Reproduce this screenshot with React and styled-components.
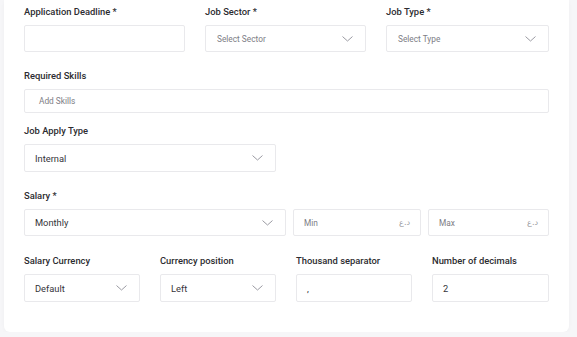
import styled, { createGlobalStyle } from "styled-components";

const GlobalStyle = createGlobalStyle`
  html, body {
    margin: 0;
    padding: 0;
    background: #f6f6f8;
    font-family: Roboto, "Liberation Sans", sans-serif;
  }
  * { box-sizing: border-box; }
`;

const Card = styled.div`
  margin-left: 4px;
  width: 565px;
  background: #fff;
  border-radius: 0 0 6px 6px;
  box-shadow: 0 1px 4px rgba(0, 0, 0, 0.03);
  padding: 5px 20px 30px 20px;
`;

const Row = styled.div`
  display: grid;
  grid-template-columns: ${(p) => p.cols};
  column-gap: ${(p) => p.gap || 20}px;
  margin-top: ${(p) => p.top || 0}px;
  width: 525px;
`;

const Field = styled.div`
  display: flex;
  flex-direction: column;
  min-width: 0;
`;

const Label = styled.label`
  font-size: 9.4px;
  font-weight: 500;
  line-height: 14px;
  color: #2c2c30;
  margin-bottom: ${(p) => p.space || 6}px;
`;

const Box = styled.div`
  height: ${(p) => p.h || 27}px;
  border: 1px solid #e9e9ec;
  border-radius: 2px;
  background: #fff;
  display: flex;
  align-items: center;
  justify-content: space-between;
  padding: 0 ${(p) => p.pr || 12}px 0 ${(p) => p.pl || 10}px;
`;

const Value = styled.span`
  font-size: 9.3px;
  color: #35353a;
`;

const Placeholder = styled.span`
  font-size: 8.3px;
  color: #7d7d85;
`;

const Currency = styled.span`
  font-family: "DejaVu Sans", sans-serif;
  font-size: 8px;
  color: #9a9aa0;
  direction: rtl;
`;

const Chevron = () => (
  <svg width="11" height="6" viewBox="0 0 11 6" fill="none">
    <polyline
      points="0.8,0.8 5.5,5 10.2,0.8"
      stroke="#9a9aa2"
      strokeWidth="1"
      strokeLinecap="round"
      strokeLinejoin="round"
    />
  </svg>
);

const Select = ({ children, placeholder, pl, h }) => (
  <Box pl={pl} h={h}>
    {placeholder ? <Placeholder>{children}</Placeholder> : <Value>{children}</Value>}
    <Chevron />
  </Box>
);

const App = () => {
  return (
    <>
      <GlobalStyle />
      <Card>
        <Row cols="161px 161px 1fr">
          <Field>
            <Label>Application Deadline *</Label>
            <Box />
          </Field>
          <Field>
            <Label>Job Sector *</Label>
            <Select placeholder pl={11}>Select Sector</Select>
          </Field>
          <Field>
            <Label>Job Type *</Label>
            <Select placeholder pl={11}>Select Type</Select>
          </Field>
        </Row>

        <Row cols="1fr" top={17}>
          <Field>
            <Label space={6}>Required Skills</Label>
            <Box h={24} pl={14}>
              <Placeholder>Add Skills</Placeholder>
            </Box>
          </Field>
        </Row>

        <Row cols="252px" top={11}>
          <Field>
            <Label>Job Apply Type</Label>
            <Select h={28}>Internal</Select>
          </Field>
        </Row>

        <Row cols="262px 128px 1fr" gap={7} top={17}>
          <Field>
            <Label>Salary *</Label>
            <Select>Monthly</Select>
          </Field>
          <Field>
            <Label>&nbsp;</Label>
            <Box pr={10}>
              <Placeholder>Min</Placeholder>
              <Currency>د.ع</Currency>
            </Box>
          </Field>
          <Field>
            <Label>&nbsp;</Label>
            <Box pr={10}>
              <Placeholder>Max</Placeholder>
              <Currency>د.ع</Currency>
            </Box>
          </Field>
        </Row>

        <Row cols="116px 116px 116px 1fr" top={18}>
          <Field>
            <Label>Salary Currency</Label>
            <Select h={28}>Default</Select>
          </Field>
          <Field>
            <Label>Currency position</Label>
            <Select h={28}>Left</Select>
          </Field>
          <Field>
            <Label>Thousand separator</Label>
            <Box h={28}>
              <Value>,</Value>
            </Box>
          </Field>
          <Field>
            <Label>Number of decimals</Label>
            <Box h={28}>
              <Value>2</Value>
            </Box>
          </Field>
        </Row>
      </Card>
    </>
  );
};

export default App;
